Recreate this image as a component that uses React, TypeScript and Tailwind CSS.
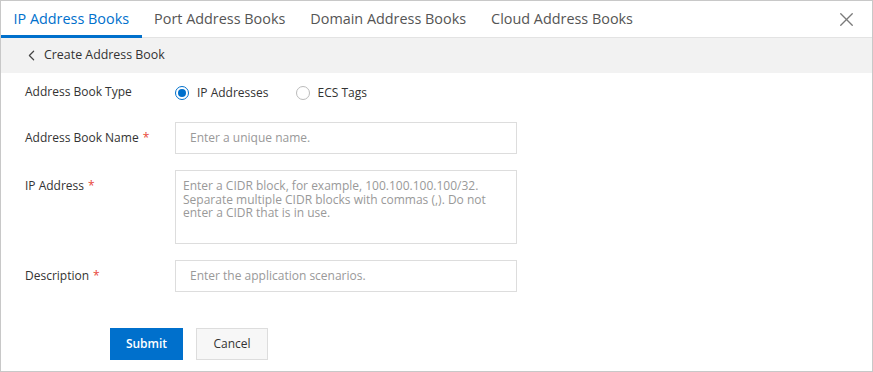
import { ChevronLeft, X } from "lucide-react";

const tabs = ["IP Address Books", "Port Address Books", "Domain Address Books", "Cloud Address Books"];

const Label = ({ text, required }: { text: string; required?: boolean }) => (
  <div className="w-[150px] shrink-0 leading-[32px] text-[#333]">
    {text}
    {required && <span className="ml-1 text-[#e84738]">*</span>}
  </div>
);

const App = () => {
  return (
    <div
      className="w-[873px] h-[372px] border border-[#c8c8c8] bg-white flex flex-col overflow-hidden text-[12px]"
      style={{ fontFamily: "'Open Sans', 'Noto Sans', sans-serif" }}
    >
      <div className="h-[37px] shrink-0 flex items-stretch border-b border-[#e3e3e3] relative">
        {tabs.map((t, i) => (
          <div
            key={t}
            className={
              i === 0
                ? "px-[12.5px] flex items-center text-[14.4px] text-[#0070cc] border-b-[3px] border-[#0070cc] -mb-[1px] pt-[1px]"
                : "px-[12.5px] flex items-center text-[14.4px] text-[#555] border-b-[3px] border-transparent -mb-[1px] pt-[1px]"
            }
          >
            {t}
          </div>
        ))}
        <div className="ml-auto mr-[14px] flex items-center text-[#7a7a7a]">
          <X size={23} strokeWidth={1.4} />
        </div>
      </div>

      <div className="h-[35px] shrink-0 bg-[#f2f2f2] flex items-center pl-[22px] text-[12.4px] text-[#333] gap-[4px]">
        <ChevronLeft size={17} strokeWidth={1.7} className="text-[#444]" />
        <span>Create Address Book</span>
      </div>

      <div className="flex flex-col pl-[24px] pt-[10px]">
        <div className="flex items-center h-[18px] mt-[1px]">
          <div className="w-[150px] shrink-0 text-[#333] -mt-[2px]">Address Book Type</div>
          <label className="flex items-center gap-[8px] text-[#333]">
            <span className="w-[14px] h-[14px] rounded-full border border-[#0070cc] flex items-center justify-center">
              <span className="w-[8px] h-[8px] rounded-full bg-[#0070cc]" />
            </span>
            IP Addresses
          </label>
          <label className="flex items-center gap-[8px] text-[#333] ml-[27px]">
            <span className="w-[14px] h-[14px] rounded-full border border-[#bbb]" />
            ECS Tags
          </label>
        </div>

        <div className="flex mt-[20px]">
          <Label text="Address Book Name" required />
          <div className="w-[342px] h-[32px] border border-[#ddd] flex items-center pl-[14px] text-[#999]">
            Enter a unique name.
          </div>
        </div>

        <div className="flex mt-[16px]">
          <Label text="IP Address" required />
          <div className="w-[342px] h-[74px] border border-[#ddd] px-[7px] pt-[8px] text-[#999] leading-[13.5px]">
            Enter a CIDR block, for example, 100.100.100.100/32. Separate multiple CIDR blocks with commas (,). Do not enter a CIDR that is in use.
          </div>
        </div>

        <div className="flex mt-[16px]">
          <Label text="Description" required />
          <div className="w-[342px] h-[32px] border border-[#ddd] flex items-center pl-[14px] text-[#999]">
            Enter the application scenarios.
          </div>
        </div>

        <div className="flex mt-[36px] pl-[85px] gap-[13px]">
          <button className="w-[73px] h-[32px] bg-[#0070cc] text-white font-semibold">Submit</button>
          <button className="w-[72px] h-[32px] bg-[#f7f7f7] border border-[#ddd] text-[#333]">Cancel</button>
        </div>
      </div>
    </div>
  );
};

export default App;
